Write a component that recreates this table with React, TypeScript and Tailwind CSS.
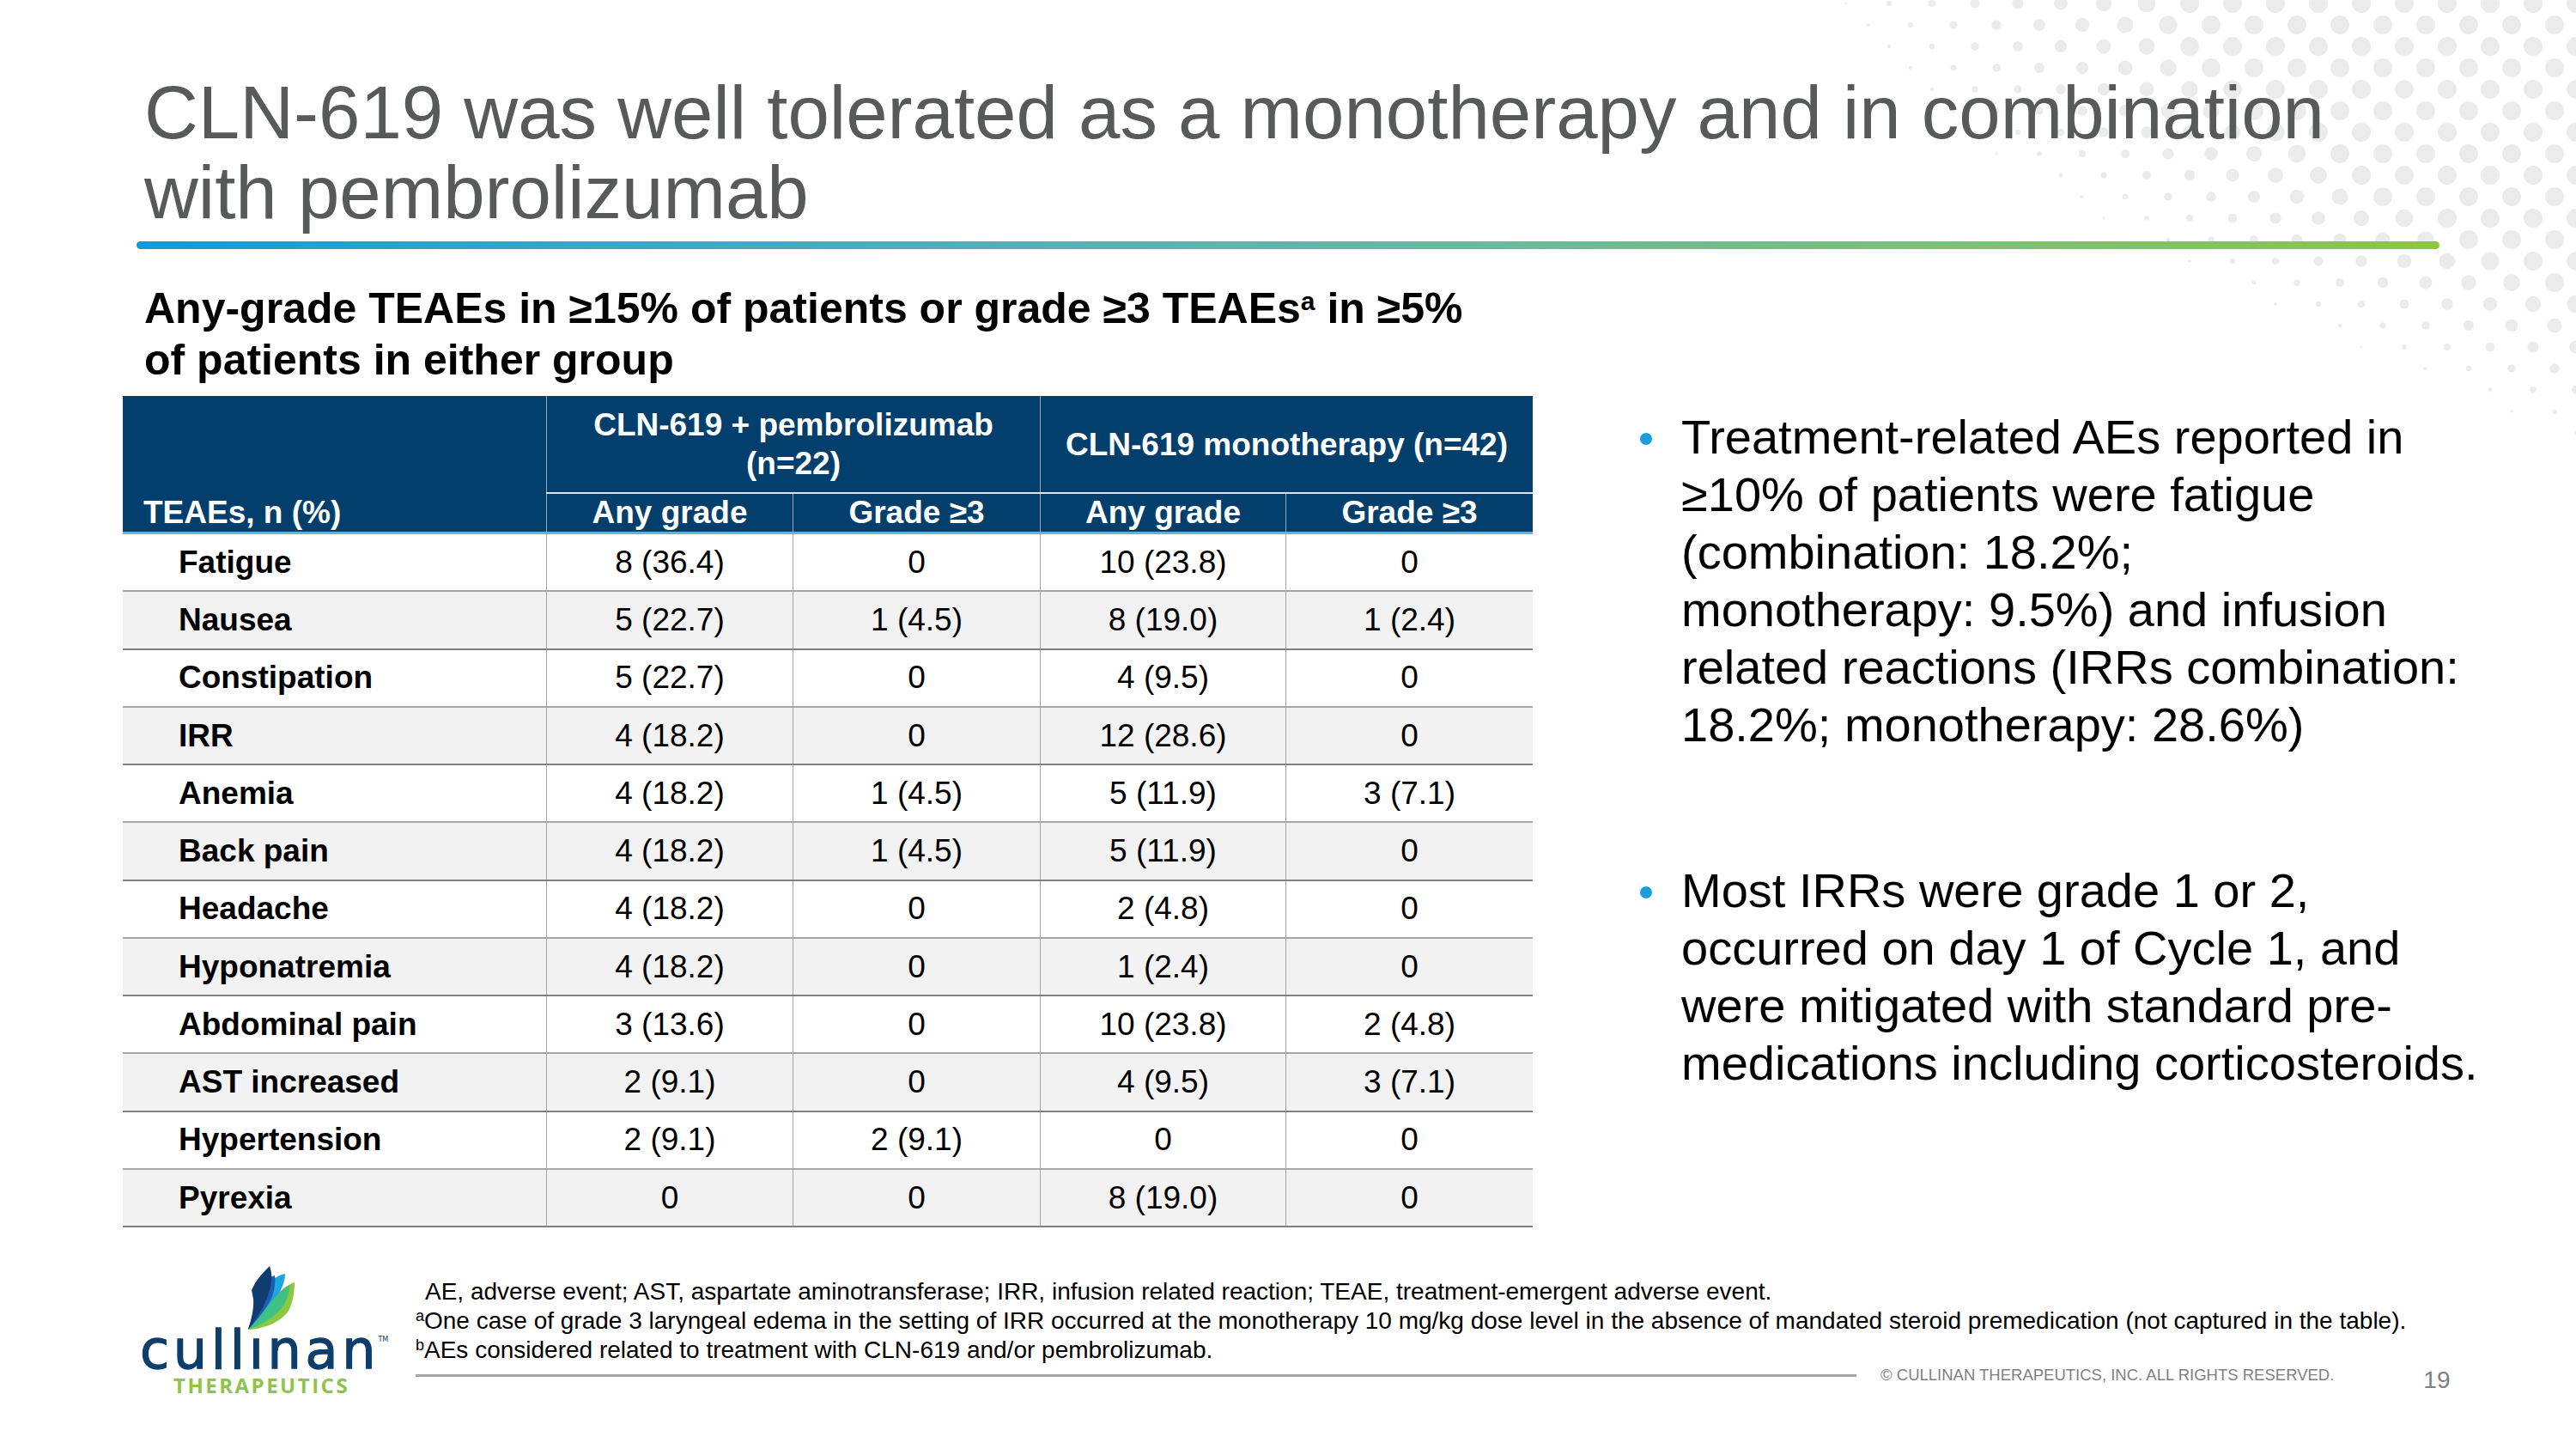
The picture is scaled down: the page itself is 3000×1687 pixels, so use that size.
import React from "react";

const rows: string[][] = [
  ["Fatigue", "8 (36.4)", "0", "10 (23.8)", "0"],
  ["Nausea", "5 (22.7)", "1 (4.5)", "8 (19.0)", "1 (2.4)"],
  ["Constipation", "5 (22.7)", "0", "4 (9.5)", "0"],
  ["IRR", "4 (18.2)", "0", "12 (28.6)", "0"],
  ["Anemia", "4 (18.2)", "1 (4.5)", "5 (11.9)", "3 (7.1)"],
  ["Back pain", "4 (18.2)", "1 (4.5)", "5 (11.9)", "0"],
  ["Headache", "4 (18.2)", "0", "2 (4.8)", "0"],
  ["Hyponatremia", "4 (18.2)", "0", "1 (2.4)", "0"],
  ["Abdominal pain", "3 (13.6)", "0", "10 (23.8)", "2 (4.8)"],
  ["AST increased", "2 (9.1)", "0", "4 (9.5)", "3 (7.1)"],
  ["Hypertension", "2 (9.1)", "2 (9.1)", "0", "0"],
  ["Pyrexia", "0", "0", "8 (19.0)", "0"],
];

// halftone dots in the top right corner
const dots: { x: number; y: number; r: number }[] = [];
for (let row = 0; row * 25 <= 620; row++) {
  const y = row * 25 + 4;
  const offset = row % 2 ? 25 : 0;
  for (let x = 3000 - offset; x >= 1900; x -= 50) {
    const s = (3000 - x) / 880 + Math.pow(y / 520, 1.5);
    const r = Math.min(11, (1.04 - s) * 22);
    if (r > 1.3) dots.push({ x: x - 1900, y, r });
  }
}

const DotPattern: React.FC = () => (
  <svg
    className="absolute top-0 right-0 pointer-events-none"
    width={1100}
    height={640}
    viewBox="0 0 1100 640"
  >
    {dots.map((d, i) => (
      <circle key={i} cx={d.x} cy={d.y} r={d.r} fill="#ebebeb" />
    ))}
  </svg>
);

const Leaves: React.FC = () => (
  <svg width={110} height={100} viewBox="0 0 110 100" className="ml-[97px]">
    <path
      d="M29 86 C50 85 68 76 76 64 C81 55 83 42 83 31 C74 34 64 42 56 52 C46 64 36 76 29 86 Z"
      fill="#8dc63f"
    />
    <path
      d="M29 86 C44 70 58 56 66 42 C70 34 72 27 72 21 C66 22 61 25 58 28 C48 46 36 68 29 86 Z"
      fill="#1da6df"
    />
    <path
      d="M29 86 C46 80 62 70 70 58 C75 50 77 42 77 34 C68 40 60 48 54 56 C44 68 36 78 29 86 Z"
      fill="#3fc185"
    />
    <path
      d="M29 86 C40 74 50 62 56 50 C60 40 61 30 60 23 C56 24 52 27 48 30 C42 48 34 68 29 86 Z"
      fill="#1c5eb6"
    />
    <path
      d="M29 86 C33 74 36 60 35 50 L33 40 L37 32 C42 24 48 18 54 12 C57 20 57 30 54 40 C50 56 40 72 29 86 Z"
      fill="#0f3d72"
    />
  </svg>
);

const Logo: React.FC = () => (
  <div className="flex flex-col w-[281px] mt-[33px]">
    <Leaves />
    <div className="relative self-start mt-[-19px] h-[58px] font-['DejaVu_Sans',sans-serif] text-[62px] leading-[58px] tracking-[4.7px] text-[#0d3d6b] [-webkit-text-stroke:1.3px_#0d3d6b]">
      cullınan
      <span className="absolute right-[-10px] top-[13px] text-[8px] leading-none tracking-normal [-webkit-text-stroke:0px]">
        TM
      </span>
    </div>
    <div className="ml-[39px] font-['Open_Sans',sans-serif] font-bold text-[24px] leading-[24px] tracking-[2.5px] text-[#8dc449]">
      THERAPEUTICS
    </div>
  </div>
);

const TableHeader: React.FC = () => (
  <div className="flex bg-[#033f6c] text-white font-bold text-[37px] border-b-[3px] border-[#55b5e6]">
    <div className="w-[493px] h-[158px] flex items-end pl-[24px] leading-[45px]">
      TEAEs, n (%)
    </div>
    <div className="flex-1 flex flex-col">
      <div className="flex h-[112px] leading-[45px]">
        <div className="w-[575px] border-l border-[#8fa9c2] flex flex-col items-center justify-center">
          <span>CLN-619 + pembrolizumab</span>
          <span>(n=22)</span>
        </div>
        <div className="flex-1 border-l border-[#8fa9c2] flex items-center justify-center">
          CLN-619 monotherapy (n=42)
        </div>
      </div>
      <div className="h-[2px] bg-[#d6e6f2]" />
      <div className="grid grid-cols-[287px_288px_286px_288px] h-[44px] leading-[44px]">
        <div className="border-l border-[#8fa9c2] text-center">Any grade</div>
        <div className="border-l border-[#8fa9c2] text-center">Grade ≥3</div>
        <div className="border-l border-[#8fa9c2] text-center">Any grade</div>
        <div className="border-l border-[#8fa9c2] text-center">Grade ≥3</div>
      </div>
    </div>
  </div>
);

const AETable: React.FC = () => (
  <div className="w-[1642px] mt-[12px]">
    <TableHeader />
    {rows.map((row, i) => (
      <div
        key={row[0]}
        className={
          i % 2
            ? "grid grid-cols-[493px_287px_288px_286px_288px] h-[67.25px] border-b-2 border-[#808080] bg-[#f2f2f2] text-[37px] text-black"
            : "grid grid-cols-[493px_287px_288px_286px_288px] h-[67.25px] border-b-2 border-[#a6a6a6] bg-white text-[37px] text-black"
        }
      >
        <div className="flex items-center pl-[65px] font-bold">{row[0]}</div>
        {row.slice(1).map((v, j) => (
          <div
            key={j}
            className="flex items-center justify-center border-l border-[#a6a6a6]"
          >
            {v}
          </div>
        ))}
      </div>
    ))}
  </div>
);

const Bullet: React.FC<{ children: React.ReactNode; className?: string }> = ({
  children,
  className,
}) => (
  <div className={`flex items-start ${className ?? ""}`}>
    <span className="mt-[29px] ml-[11px] w-[14px] h-[14px] rounded-full bg-[#1a9fdb] shrink-0" />
    <p className="ml-[34px] w-[950px] text-[56px] leading-[67px] text-black">
      {children}
    </p>
  </div>
);

const App: React.FC = () => {
  return (
    <div className="relative w-[3000px] h-[1687px] overflow-hidden bg-white font-['Liberation_Sans',Arial,sans-serif]">
      <DotPattern />

      <div className="relative flex flex-col">
        {/* title */}
        <h1 className="pt-[84px] pl-[168px] text-[87px] leading-[93px] text-[#58595b] font-normal">
          CLN-619 was well tolerated as a monotherapy and in combination
          <br />
          with pembrolizumab
        </h1>
        <div className="ml-[159px] mt-[11px] w-[2682px] h-[9px] rounded-full bg-linear-to-r from-[#0d9ad9] via-[#5fb7ab] to-[#8dc63f]" />

        {/* body */}
        <div className="flex mt-[39px] h-[1100px]">
          <div className="ml-[143px] flex flex-col">
            <h2 className="pl-[25px] text-[50px] leading-[60px] font-bold text-black">
              Any-grade TEAEs in ≥15% of patients or grade ≥3 TEAEs
              <sup className="text-[30px]">a</sup> in ≥5%
              <br />
              of patients in either group
            </h2>
            <AETable />
          </div>

          <div className="ml-[114px] mt-[146px] flex flex-col">
            <Bullet>
              Treatment-related AEs reported in
              <br />
              ≥10% of patients were fatigue
              <br />
              (combination: 18.2%;
              <br />
              monotherapy: 9.5%) and infusion
              <br />
              related reactions (IRRs combination:
              <br />
              18.2%; monotherapy: 28.6%)
            </Bullet>
            <Bullet className="mt-[126px]">
              Most IRRs were grade 1 or 2, occurred on day 1 of Cycle 1, and
              were mitigated with standard pre-medications including
              corticosteroids.
            </Bullet>
          </div>
        </div>

        {/* footer */}
        <div className="flex pl-[163px]">
          <Logo />
          <div className="ml-[40px] mt-[58px] flex flex-col">
            <div className="text-[28px] leading-[34px] text-black">
              <p className="pl-[11px]">
                AE, adverse event; AST, aspartate aminotransferase; IRR, infusion
                related reaction; TEAE, treatment-emergent adverse event.
              </p>
              <p>
                <sup className="text-[18px]">a</sup>One case of grade 3 laryngeal
                edema in the setting of IRR occurred at the monotherapy 10 mg/kg
                dose level in the absence of mandated steroid premedication (not
                captured in the table).
              </p>
              <p>
                <sup className="text-[18px]">b</sup>AEs considered related to
                treatment with CLN-619 and/or pembrolizumab.
              </p>
            </div>
            <div className="flex items-center h-[24px]">
              <div className="w-[1678px] h-[3px] bg-[#a6a6a6]" />
              <span className="ml-[28px] text-[18.5px] leading-none text-[#7f7f7f] whitespace-nowrap">
                © CULLINAN THERAPEUTICS, INC. ALL RIGHTS RESERVED.
              </span>
              <span className="ml-[104px] mt-[12px] text-[28px] leading-none text-[#7f7f7f]">
                19
              </span>
            </div>
          </div>
        </div>
      </div>
    </div>
  );
};

export default App;
